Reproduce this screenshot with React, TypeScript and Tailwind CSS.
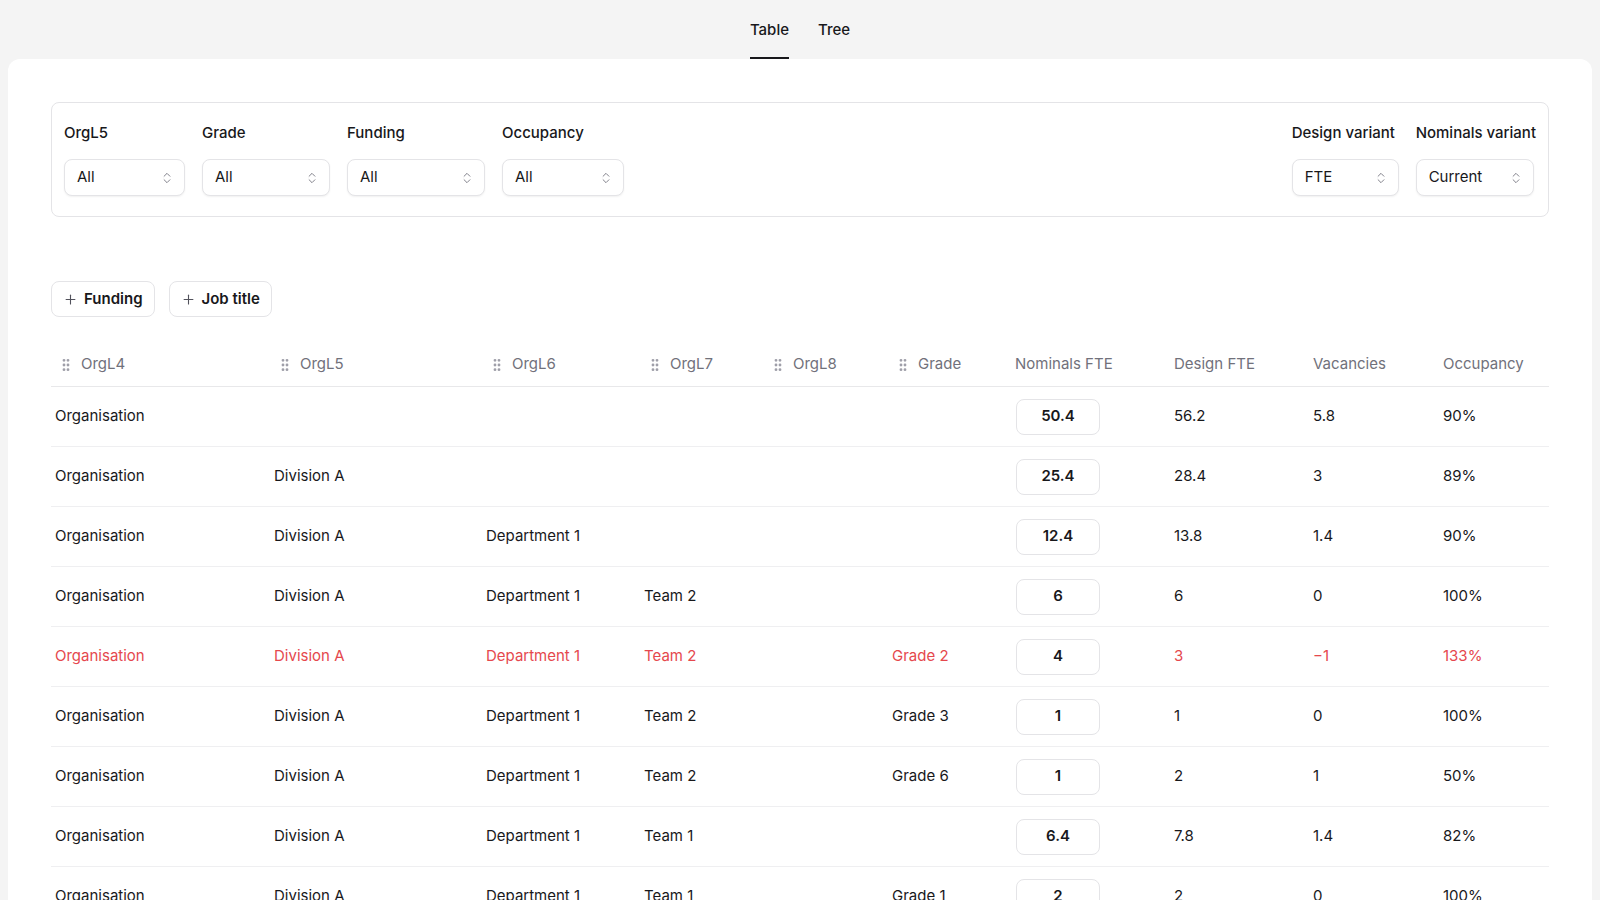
import { ChevronsUpDown, GripVertical, Plus } from "lucide-react";

type Row = {
  l4: string;
  l5?: string;
  l6?: string;
  l7?: string;
  l8?: string;
  grade?: string;
  nominals: string;
  design: string;
  vacancies: string;
  occupancy: string;
  over?: boolean;
};

const rows: Row[] = [
  { l4: "Organisation", nominals: "50.4", design: "56.2", vacancies: "5.8", occupancy: "90%" },
  { l4: "Organisation", l5: "Division A", nominals: "25.4", design: "28.4", vacancies: "3", occupancy: "89%" },
  { l4: "Organisation", l5: "Division A", l6: "Department 1", nominals: "12.4", design: "13.8", vacancies: "1.4", occupancy: "90%" },
  { l4: "Organisation", l5: "Division A", l6: "Department 1", l7: "Team 2", nominals: "6", design: "6", vacancies: "0", occupancy: "100%" },
  { l4: "Organisation", l5: "Division A", l6: "Department 1", l7: "Team 2", grade: "Grade 2", nominals: "4", design: "3", vacancies: "−1", occupancy: "133%", over: true },
  { l4: "Organisation", l5: "Division A", l6: "Department 1", l7: "Team 2", grade: "Grade 3", nominals: "1", design: "1", vacancies: "0", occupancy: "100%" },
  { l4: "Organisation", l5: "Division A", l6: "Department 1", l7: "Team 2", grade: "Grade 6", nominals: "1", design: "2", vacancies: "1", occupancy: "50%" },
  { l4: "Organisation", l5: "Division A", l6: "Department 1", l7: "Team 1", nominals: "6.4", design: "7.8", vacancies: "1.4", occupancy: "82%" },
  { l4: "Organisation", l5: "Division A", l6: "Department 1", l7: "Team 1", grade: "Grade 1", nominals: "2", design: "2", vacancies: "0", occupancy: "100%" },
];

const gridCols = "grid grid-cols-[219px_212px_158px_123px_125px_123px_159px_139px_130px_110px]";

function Select({ label, value, width }: { label: string; value: string; width: string }) {
  return (
    <div className="flex flex-col gap-4">
      <span className="text-[15px] leading-5 font-medium text-zinc-900">{label}</span>
      <button
        className={`flex h-[37px] items-center justify-between rounded-lg border border-[#e4e4e7] bg-white pl-[12px] pr-[10px] text-[15px] text-zinc-900 shadow-[0_1px_2px_rgba(0,0,0,0.06)] ${width}`}
      >
        <span>{value}</span>
        <ChevronsUpDown size={14} strokeWidth={1.5} className="text-zinc-500" />
      </button>
    </div>
  );
}

function GripHeader({ label }: { label: string }) {
  return (
    <div className="flex items-center gap-[7px] pl-[7px] text-zinc-500">
      <GripVertical size={16} strokeWidth={2.25} className="text-zinc-400" />
      <span>{label}</span>
    </div>
  );
}

export default function App() {
  return (
    <div className="h-screen overflow-hidden bg-[#f4f4f4] font-['Inter',sans-serif] text-zinc-900">
      <nav className="flex h-[59px] items-stretch justify-center gap-[29px]">
        <div className="flex flex-col justify-between pt-[20px]">
          <span className="text-[15px] leading-5 font-medium text-zinc-900">Table</span>
          <span className="h-[2px] w-full bg-zinc-900" />
        </div>
        <div className="flex flex-col justify-between pt-[20px]">
          <span className="text-[15px] leading-5 font-medium text-zinc-900">Tree</span>
          <span className="h-[2px] w-full bg-transparent" />
        </div>
      </nav>

      <main className="mx-2 min-h-[900px] rounded-xl bg-white px-[43px] pt-[43px]">
        <section className="flex items-start justify-between rounded-lg border border-[#e4e4e7] px-3 py-5">
          <div className="flex gap-[17px]">
            <Select label="OrgL5" value="All" width="w-[121px]" />
            <Select label="Grade" value="All" width="w-[128px]" />
            <Select label="Funding" value="All" width="w-[138px]" />
            <Select label="Occupancy" value="All" width="w-[122px]" />
          </div>
          <div className="flex gap-[17px]">
            <Select label="Design variant" value="FTE" width="w-[107px]" />
            <Select label="Nominals variant" value="Current" width="w-[118px]" />
          </div>
        </section>

        <div className="mt-16 flex gap-[14px]">
          <button className="flex h-9 items-center gap-[6px] rounded-lg border border-[#e4e4e7] bg-white px-[11px] text-[15px] font-semibold text-zinc-900">
            <Plus size={15} strokeWidth={1.75} className="text-zinc-600" />
            Funding
          </button>
          <button className="flex h-9 items-center gap-[6px] rounded-lg border border-[#e4e4e7] bg-white px-[11px] text-[15px] font-semibold text-zinc-900">
            <Plus size={15} strokeWidth={1.75} className="text-zinc-600" />
            Job title
          </button>
        </div>

        <div className="mt-[26px] text-[15px]">
          <div className={`${gridCols} h-[44px] items-center border-b border-[#e8e8ea]`}>
            <GripHeader label="OrgL4" />
            <GripHeader label="OrgL5" />
            <GripHeader label="OrgL6" />
            <GripHeader label="OrgL7" />
            <GripHeader label="OrgL8" />
            <GripHeader label="Grade" />
            <span className="pl-1 text-zinc-500">Nominals FTE</span>
            <span className="pl-1 text-zinc-500">Design FTE</span>
            <span className="pl-1 text-zinc-500">Vacancies</span>
            <span className="pl-1 text-zinc-500">Occupancy</span>
          </div>

          {rows.map((row, i) => (
            <div
              key={i}
              className={`${gridCols} h-[60px] items-center border-b border-[#efeff1] ${row.over ? "text-[#e5484d]" : "text-zinc-900"}`}
            >
              <span className="pl-1">{row.l4}</span>
              <span className="pl-1">{row.l5}</span>
              <span className="pl-1">{row.l6}</span>
              <span className="pl-1">{row.l7}</span>
              <span className="pl-1">{row.l8}</span>
              <span className="pl-1">{row.grade}</span>
              <div className="pl-[5px]">
                <div className="flex h-9 w-[84px] items-center justify-center rounded-lg border border-[#e4e4e7] bg-white font-semibold text-zinc-900">
                  {row.nominals}
                </div>
              </div>
              <span className="pl-1">{row.design}</span>
              <span className="pl-1">{row.vacancies}</span>
              <span className="pl-1">{row.occupancy}</span>
            </div>
          ))}
        </div>
      </main>
    </div>
  );
}
